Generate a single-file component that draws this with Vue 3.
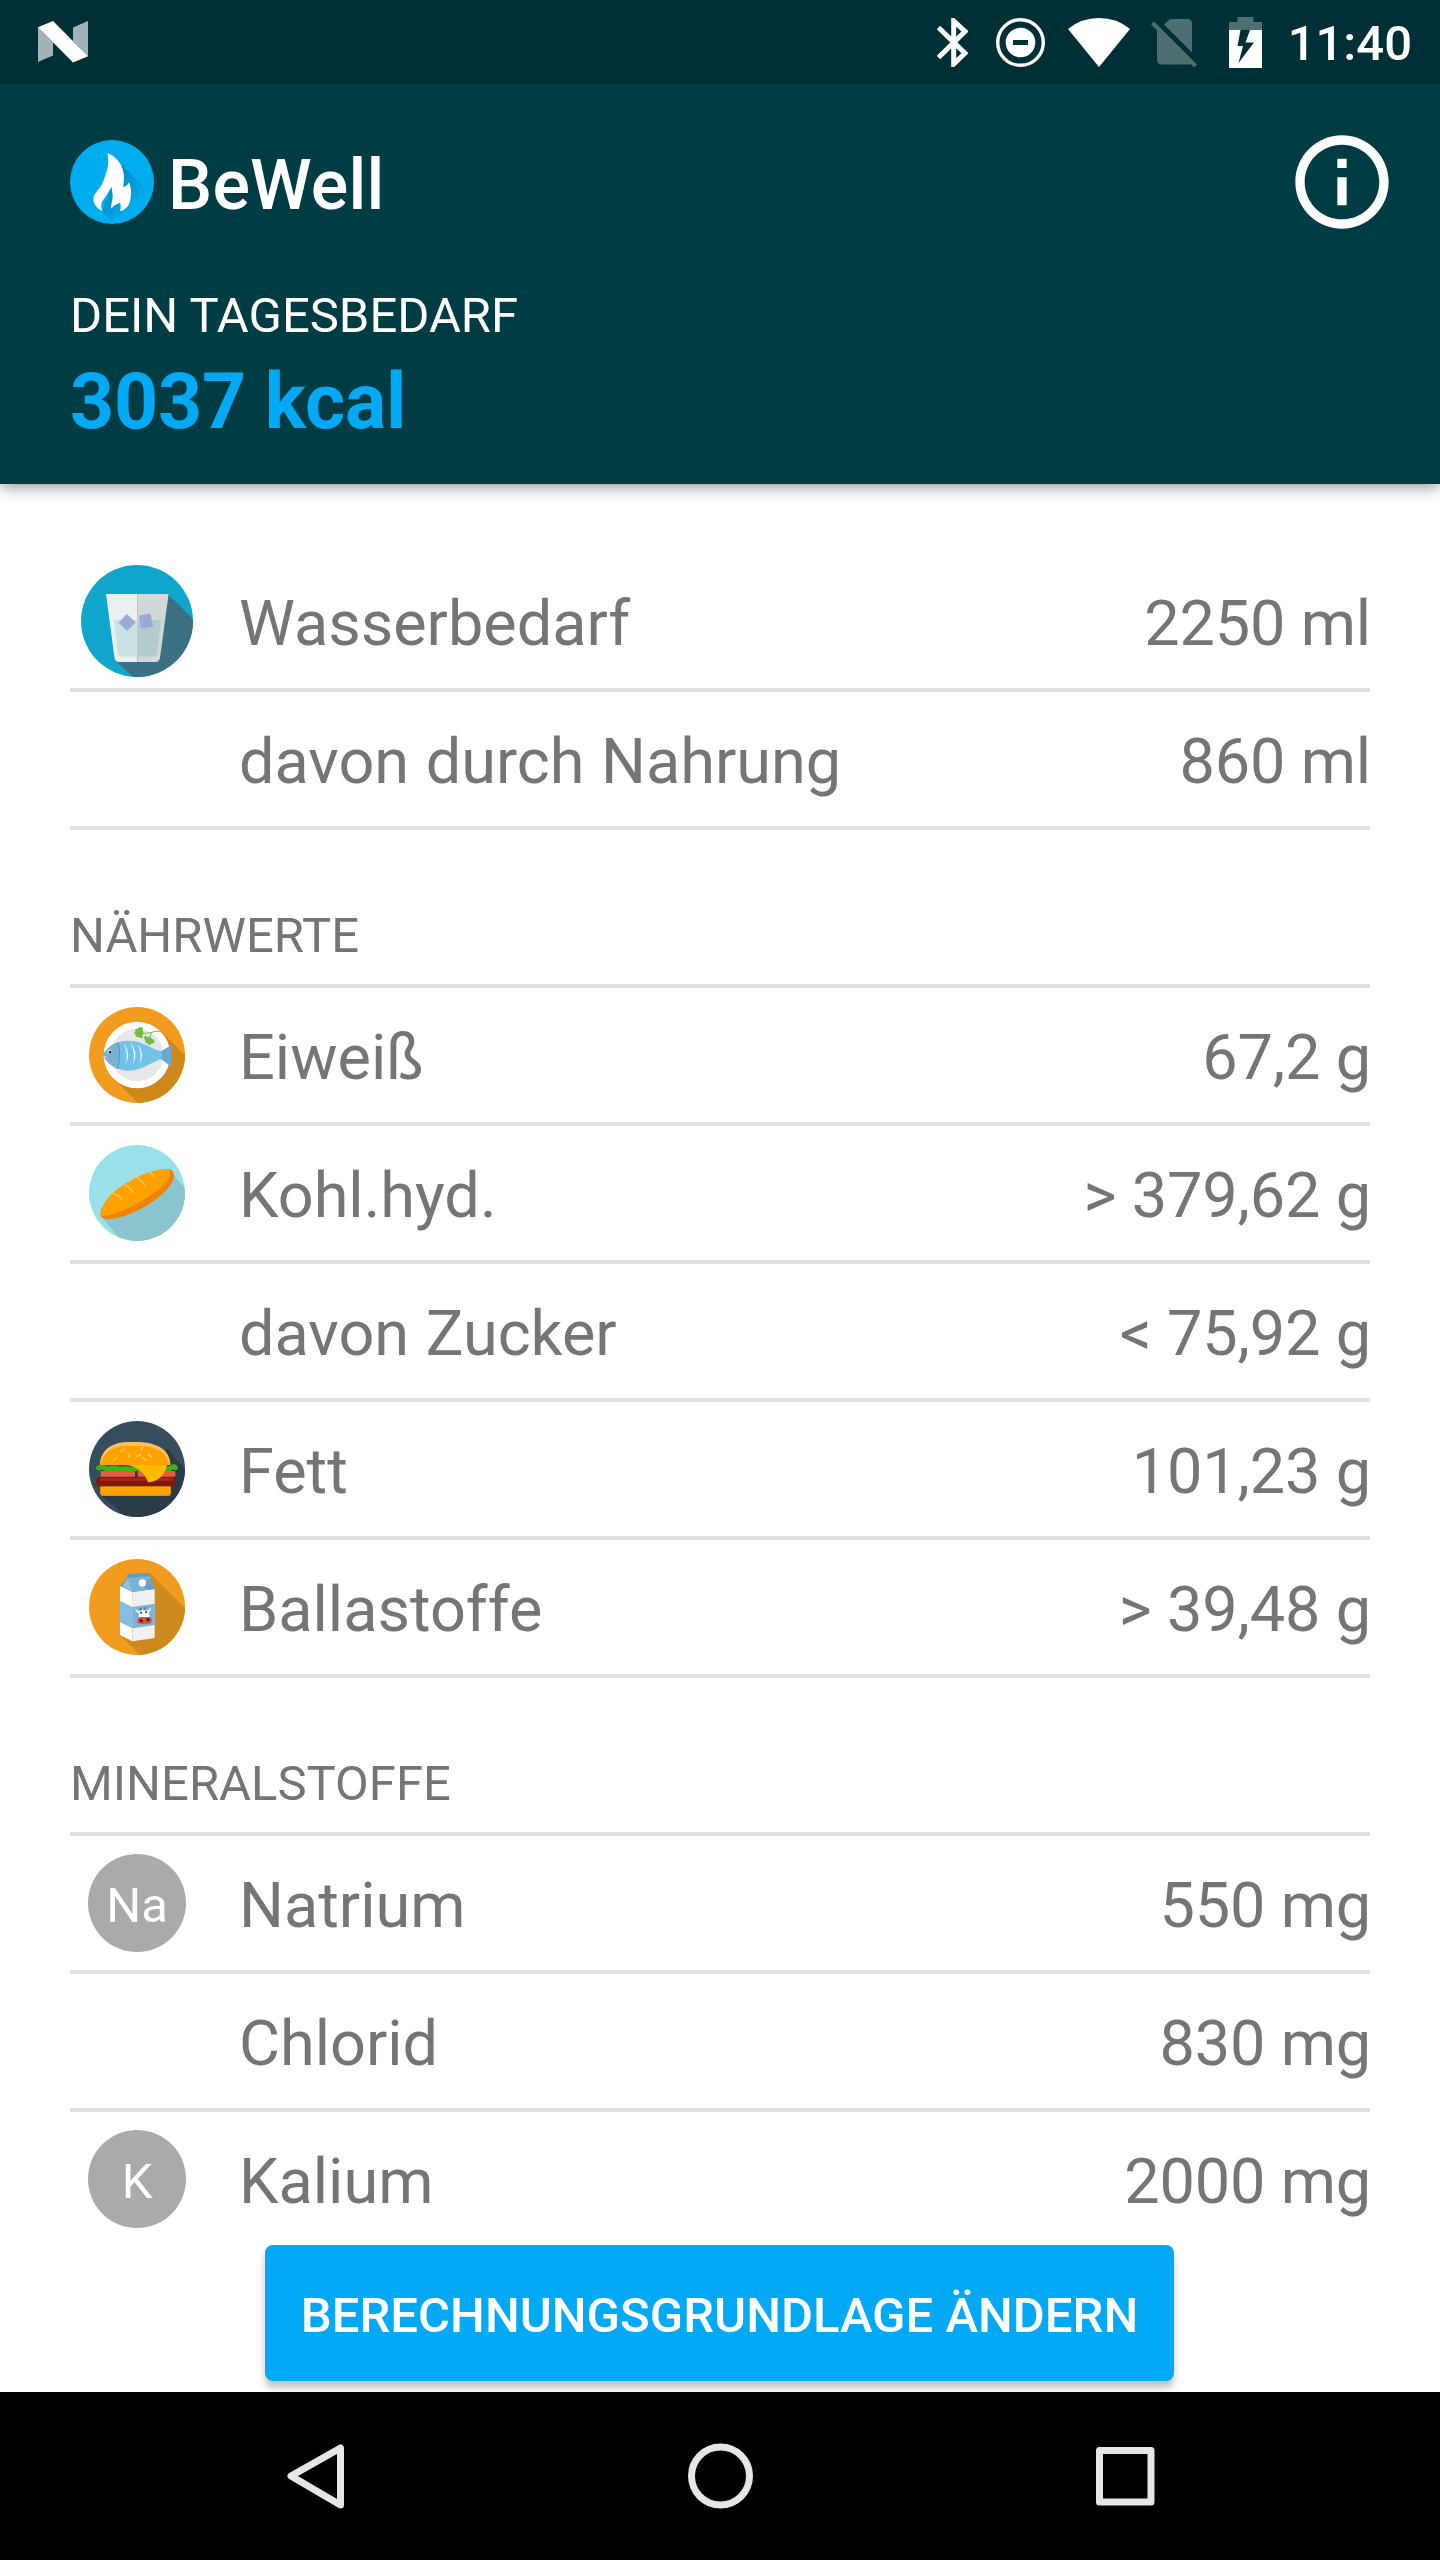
<template>
	<div class="screen">
		<div class="status-bar">
			<svg class="icon-n" viewBox="0 0 50 42">
				<path d="M0 6v35l15-6.500V21.500zM35 6.500L50 0v35.500L35 20z" fill="#a1b3b6" />
				<path d="M0 6.200L15 0l35 35.200L35 41.500z" fill="#fff" />
			</svg>
			<div class="status-icons">
				<svg class="icon-bluetooth" viewBox="0 0 31 49">
					<path d="M1.500 9.500L28 35.200 16.700 46V3L28 13.500 1.500 39.500" fill="none" stroke="#fff" stroke-width="5" />
				</svg>
				<svg class="icon-dnd" viewBox="0 0 49 49">
					<circle cx="24.500" cy="24.500" r="22.800" fill="none" stroke="#fff" stroke-width="3.400" />
					<path d="M24.500 9.700a14.800 14.800 0 1 0 0 29.600 14.800 14.800 0 0 0 0-29.600zM17 22h15v5H17z" fill="#fff" fill-rule="evenodd" />
				</svg>
				<svg class="icon-wifi" viewBox="0 0 62 49">
					<path d="M31 49L0 11Q13 0 31 0t31 11z" fill="#fff" />
				</svg>
				<svg class="icon-sim" viewBox="0 0 46 49">
					<g fill="#4d6f74">
						<path d="M13 6.500L19 1h17q5 0 5 5v28.500z" />
						<path d="M6 12l34 33.500q-1 1-3 1H11q-5 0-5-5z" />
						<path d="M0 6.300L3 3.500 46 46.500 43 49.500z" />
					</g>
				</svg>
				<svg class="icon-battery" viewBox="0 0 33 51">
					<path d="M0 13V5h8.500V0h16v5H33v8z" fill="#4d6f74" />
					<path d="M0 13h33v38H0z" fill="#fff" />
					<path d="M11.500 13h9.500l-4.500 12.500h8.500L9.500 46l4.500-17H8.500z" fill="#003036" />
				</svg>
				<span class="clock">11:40</span>
			</div>
		</div>

		<header class="header">
			<div class="title-bar">
				<svg class="logo" viewBox="0 0 252 252">
					<defs>
						<linearGradient id="flame-shade" x1="0.300" y1="0.300" x2="0.800" y2="0.800">
							<stop offset="0" stop-color="#008fc9" />
							<stop offset="1" stop-color="#00aeef" />
						</linearGradient>
					</defs>
					<circle cx="126" cy="126" r="126" fill="#00aeef" />
					<path d="M152 72l80 76-55 62-27 12-24 20-30-28z" fill="url(#flame-shade)" />
					<path
						d="M112 39C140 48 162 80 162 110c0 12-2 22-2 32 8-4 14-8 17-15 8 20 7 36 4 52-3 18-14 30-31 35 3-10 3-17 0-25-10 3-20 8-27 17-1-10 4-20 5-34 0-14-3-24-3-32-10 14-15 28-25 39-9 12-7 24-2 34C76 204 66 184 72 168c6-14 20-24 27-42 8-22 22-50 13-87z"
						fill="#fff"
					/>
				</svg>
				<h1 class="title">BeWell</h1>
				<svg class="icon-info" viewBox="0 0 24 24">
					<path
						d="M11 7h2v2h-2zm0 4h2v6h-2zm1-9C6.480 2 2 6.480 2 12s4.480 10 10 10 10-4.480 10-10S17.520 2 12 2zm0 18c-4.410 0-8-3.590-8-8s3.590-8 8-8 8 3.590 8 8-3.590 8-8 8z"
						fill="#fff"
					/>
				</svg>
			</div>
			<div class="need-label">DEIN TAGESBEDARF</div>
			<div class="need-value">3037 kcal</div>
		</header>

		<main class="content">
			<section v-for="(section, i) in sections" :key="i" class="section">
				<h2 v-if="section.title" class="section-title">{{ section.title }}</h2>
				<div v-for="row in section.rows" :key="row.label" class="row">
					<div class="row-icon">
						<svg v-if="row.icon === 'water'" class="water" viewBox="0 0 112 112">
							<clipPath id="clip-water"><circle cx="56" cy="56" r="56" /></clipPath>
							<g clip-path="url(#clip-water)">
								<path d="M0 0h112v112H0z" fill="#10a6cc" />
								<path d="M87 29l25 25v58H52L35 96z" fill="#3c7083" />
							</g>
							<path d="M25 29h31.300v68H38q-3.500 0-4.500-4z" fill="#ebeff1" />
							<path d="M56.300 29h31.300L79 93q-1 4-4.500 4H56.300z" fill="#d2d7d8" />
							<path d="M33 55h23.300v36.500H41q-4 0-4.500-4z" fill="#cae2e2" />
							<path d="M56.300 55H80l-3.500 32.500q-.5 4-4.500 4H56.300z" fill="#b2cccc" />
							<path d="M46 49.500l8 8-8 8-8-8zM58.500 51l10.500-2 2.500 12-11 2z" fill="#9ba9d6" stroke="#9ba9d6" stroke-linejoin="round" />
						</svg>

						<svg v-else-if="row.icon === 'fish'" viewBox="0 0 288 288">
							<clipPath id="clip-fish"><circle cx="144" cy="144" r="144" /></clipPath>
							<g clip-path="url(#clip-fish)">
								<path d="M0 0h288v288H0z" fill="#f29c1f" />
								<path d="M215 72l73 73v143H148l-76-74z" fill="#cd871b" />
							</g>
							<circle cx="144" cy="144" r="100" fill="#fff" />
							<circle cx="144" cy="144" r="79" fill="#e6e7e9" />
							<path d="M41 144c20-32 48-43 78-43 42 0 66 24 98 32l31-19q-5 30 0 65l-31-22c-32 8-56 34-98 34-30 0-60-15-78-47z" fill="#72c3e8" />
							<path d="M217 133l31-19q-5 30 0 65l-31-22q4-12 0-24z" fill="#68a7d0" />
							<path d="M41 144c12-20 28-33 46-38q8 38-1 79c-19-7-35-22-45-41z" fill="#7ab0d2" />
							<path d="M87 106q10 38-1 79" fill="none" stroke="#5b95bd" stroke-width="3" />
							<path d="M106 111q18 30 5 56 8-28-5-56zM127 112q20 28 6 55 8-27-6-55zM148 115q17 25 5 50 7-25-5-50z" fill="#fff" stroke="#fff" stroke-width="1" />
							<circle cx="62" cy="134" r="6.500" fill="#fff" />
							<circle cx="63" cy="135" r="4.500" fill="#222" />
							<path d="M43 150h9" stroke="#fff" stroke-width="2.500" />
							<path d="M158 80q28-2 38-6 12-2 24 0M187 77l-4 16" fill="none" stroke="#73bd42" stroke-width="3" />
							<path d="M162 62l-12-2-4 5-7 1v7l-4 5 5 5 1 7 7-1 5 4 9-1-2-12 4-5-3-6z" fill="#73bd42" />
							<path d="M169 85l-5 9 5 5-1 7 7 3 6 6 6-5 7-1 3-6-3-5-6-3-5-7-7 2z" fill="#73bd42" />
						</svg>

						<svg v-else-if="row.icon === 'bread'" viewBox="0 0 288 288">
							<clipPath id="clip-bread"><circle cx="144" cy="144" r="144" /></clipPath>
							<g clip-path="url(#clip-bread)">
								<path d="M0 0h288v288H0z" fill="#99e0e8" />
								<path d="M254 90l34 40v158H98L38 216z" fill="#8bc6d0" />
							</g>
							<path d="M37 216c-10-18 14-58 58-90 48-34 104-54 142-54 14 1 21 12 17 27-7 30-46 64-94 90-48 27-108 42-123 27z" fill="#f08200" />
							<path d="M36 212c-6-22 20-58 60-87 46-33 104-53 140-53 13 4 8 22-6 40-23 28-74 61-118 80-32 14-60 22-76 20z" fill="#ffa200" />
							<path d="M64 142q30 5 37 24-13-15-37-24zM100 116q25 4 35 30-13-19-35-30zM135 94q25 5 34 31-13-20-34-31zM172 79q19 1 26 20-11-15-26-20z" fill="#ffc05c" stroke="#ffc05c" stroke-width="2" />
						</svg>

						<svg v-else-if="row.icon === 'burger'" viewBox="0 0 288 288">
							<clipPath id="clip-burger"><circle cx="144" cy="144" r="144" /></clipPath>
							<g clip-path="url(#clip-burger)">
								<path d="M0 0h288v288H0z" fill="#354d5c" />
								<path d="M236 85l52 60v143H110L33 218z" fill="#2a3c48" />
							</g>
							<path d="M33 196h213v19q0 10-11 10H44q-11 0-11-10z" fill="#f08a00" />
							<path d="M36 196h207v16q0 9-10 9H46q-10 0-10-9z" fill="#ffa200" />
							<rect x="21" y="168" width="239" height="28" rx="11" fill="#7b1a0e" />
							<rect x="33" y="170" width="220" height="10" rx="4" fill="#a82315" />
							<rect x="35" y="150" width="103" height="17" rx="3" fill="#ec5a46" />
							<rect x="146" y="150" width="113" height="17" rx="3" fill="#ec5a46" />
							<path d="M29 141q9-5 17 0t19 2 18 0 18 1 18 1 18-1 18 0 18-1 18 0 18-1 18 0 18-1 14-1" fill="none" stroke="#3fb60f" stroke-width="15" stroke-linecap="round" />
							<path d="M33 132C33 88 68 63 118 63h24c64 0 102 25 102 69z" fill="#ffc05c" />
							<path d="M36 132c2-36 34-58 82-58h24c60 0 94 20 98 58z" fill="#ffa200" />
							<path d="M109 132h126c-8 30-30 52-58 52-9-28-34-50-68-52z" fill="#ffba00" />
							<path d="M94 93l13-11M119 97l2 14M161 76l-5 13M142 107l14-7M159 109l14 9M177 100l14 11M74 118l11-9" stroke="#ffd15c" stroke-width="4" />
						</svg>

						<svg v-else-if="row.icon === 'milk'" viewBox="0 0 288 288">
							<clipPath id="clip-milk"><circle cx="144" cy="144" r="144" /></clipPath>
							<g clip-path="url(#clip-milk)">
								<path d="M0 0h288v288H0z" fill="#f29c1f" />
								<path d="M183 42l105 106v140H152l-57-58z" fill="#cf8a1e" />
							</g>
							<path d="M93 81l37 18v148l-37-19z" fill="#fff" />
							<path d="M130 99l67-9v147l-67 10z" fill="#f1f1f1" />
							<path d="M93 125l37 19v64l-37-18z" fill="#82c0e3" />
							<path d="M130 144l67-10v64l-67 10z" fill="#78b4d8" />
							<path d="M93 81l23-26 2 10-18 19z" fill="#5c9dc5" />
							<path d="M116 55l67-5 14 40-67 9-31-17z" fill="#78b4d8" />
							<path d="M99 81l19-20 12 38z" fill="#8ac4e5" />
							<path d="M160 82l24-25 13 33-20 2z" fill="#689fc3" />
							<path d="M115 45l68-3v10l-68 5z" fill="#5c9dc5" />
							<circle cx="160" cy="72" r="11" fill="#fff" />
							<path d="M138 149l11 8q14-6 24-1l13-9q-1 10-7 14l4 16h-35l3-15q-9-1-13-13z" fill="#fff" />
							<path d="M153 147l3 6M169 145l-2 7" stroke="#776255" stroke-width="4" />
							<rect x="145" y="174" width="43" height="20" rx="9" fill="#e9493c" />
							<g fill="#3a2520">
								<circle cx="157" cy="185" r="5" />
								<circle cx="177" cy="182" r="5" />
								<circle cx="156" cy="161" r="3" />
								<circle cx="171" cy="160" r="3" />
							</g>
						</svg>

						<span v-else-if="row.badge" class="badge">{{ row.badge }}</span>
					</div>
					<span class="row-label">{{ row.label }}</span>
					<span class="row-value">{{ row.value }}</span>
				</div>
			</section>
		</main>

		<div class="action-bar">
			<button class="button" type="button">BERECHNUNGSGRUNDLAGE ÄNDERN</button>
		</div>

		<nav class="nav-bar">
			<div class="nav-item">
				<svg viewBox="0 0 66 66">
					<path d="M9 33L58.500 5v57z" />
				</svg>
			</div>
			<div class="nav-item">
				<svg viewBox="0 0 66 66">
					<circle cx="33.500" cy="33" r="29" />
				</svg>
			</div>
			<div class="nav-item">
				<svg viewBox="0 0 66 66">
					<rect x="7.500" y="7.500" width="51.500" height="51.500" />
				</svg>
			</div>
		</nav>
	</div>
</template>

<script setup>
const sections = [
	{
		rows: [
			{ label: 'Wasserbedarf', value: '2250 ml', icon: 'water' },
			{ label: 'davon durch Nahrung', value: '860 ml' },
		],
	},
	{
		title: 'NÄHRWERTE',
		rows: [
			{ label: 'Eiweiß', value: '67,2 g', icon: 'fish' },
			{ label: 'Kohl.hyd.', value: '> 379,62 g', icon: 'bread' },
			{ label: 'davon Zucker', value: '< 75,92 g' },
			{ label: 'Fett', value: '101,23 g', icon: 'burger' },
			{ label: 'Ballastoffe', value: '> 39,48 g', icon: 'milk' },
		],
	},
	{
		title: 'MINERALSTOFFE',
		rows: [
			{ label: 'Natrium', value: '550 mg', badge: 'Na' },
			{ label: 'Chlorid', value: '830 mg' },
			{ label: 'Kalium', value: '2000 mg', badge: 'K' },
		],
	},
]
</script>

<style>
body {
	margin: 0;
	background: #fff;
}
</style>

<style scoped>
.screen {
	display: flex;
	flex-direction: column;
	width: 1440px;
	height: 2560px;
	overflow: hidden;
	background: #fff;
	color: #757575;
	font-family: Roboto, sans-serif;
}

.screen svg {
	display: block;
	flex-shrink: 0;
}

.status-bar {
	display: flex;
	align-items: center;
	justify-content: space-between;
	box-sizing: border-box;
	flex-shrink: 0;
	height: 84px;
	padding: 0 28px 0 38px;
	background: #003036;
}

.icon-n {
	width: 50px;
	height: 42px;
}

.status-icons {
	display: flex;
	align-items: center;
}

.icon-bluetooth {
	width: 31px;
	height: 49px;
	margin-right: 28px;
}

.icon-dnd {
	width: 49px;
	height: 49px;
	margin-right: 23px;
}

.icon-wifi {
	width: 62px;
	height: 49px;
	margin-right: 21px;
}

.icon-sim {
	width: 46px;
	height: 49px;
	margin-right: 32px;
}

.icon-battery {
	width: 33px;
	height: 51px;
	margin-right: 26px;
}

.clock {
	color: #fff;
	font-size: 49px;
	font-weight: 500;
	line-height: 84px;
	padding-top: 4px;
}

.header {
	position: relative;
	box-sizing: border-box;
	flex-shrink: 0;
	height: 400px;
	padding: 42px 42px 0 70px;
	background: #003c43;
	box-shadow: 0 4px 14px rgba(0, 0, 0, 0.38);
}

.title-bar {
	display: flex;
	align-items: center;
	height: 112px;
}

.logo {
	width: 84px;
	height: 84px;
}

.title {
	flex: 1;
	margin: 6px 0 0 14px;
	color: #fff;
	font-size: 70px;
	font-weight: 500;
	letter-spacing: 0.2px;
	line-height: 82px;
}

.icon-info {
	width: 112px;
	height: 112px;
}

.need-label {
	margin-top: 49px;
	color: #fff;
	font-size: 49px;
	line-height: 58px;
}

.need-value {
	margin-top: 12px;
	color: #03a9f4;
	font-size: 77px;
	font-weight: 700;
	letter-spacing: -0.2px;
	line-height: 90px;
}

.content {
	flex: 1;
	min-height: 0;
	overflow: hidden;
	padding: 70px 70px 0;
}

.section-title {
	box-sizing: border-box;
	height: 158px;
	margin: 0;
	padding-top: 77px;
	border-bottom: 4px solid #e0e0e0;
	font-size: 49px;
	font-weight: 400;
	line-height: 58px;
}

.row {
	display: flex;
	align-items: center;
	height: 134px;
	border-bottom: 4px solid #e0e0e0;
	font-size: 63px;
	line-height: 74px;
}

.row-icon {
	display: flex;
	justify-content: center;
	width: 134px;
	margin-right: 35px;
}

.row-icon svg {
	width: 96px;
	height: 96px;
}

.row-icon .water {
	width: 112px;
	height: 112px;
}

.badge {
	width: 98px;
	height: 98px;
	border-radius: 50%;
	background: #aaa;
	color: #fff;
	font-size: 49px;
	line-height: 103px;
	text-align: center;
}

.row-label,
.row-value {
	padding-top: 6px;
}

.row-label {
	flex: 1;
	word-spacing: 1px;
}

.row-value {
	margin-right: -1px;
	letter-spacing: -0.15px;
}

.action-bar {
	display: flex;
	justify-content: center;
	align-items: flex-start;
	box-sizing: border-box;
	flex-shrink: 0;
	height: 147px;
	padding-right: 1px;
	background: #fff;
}

.button {
	width: 909px;
	height: 136px;
	padding: 4px 0 0;
	border: 0;
	border-radius: 8px;
	background: #03a9f4;
	box-shadow: 0 7px 7px rgba(0, 0, 0, 0.24);
	color: #fff;
	font-family: inherit;
	font-size: 49px;
	font-weight: 500;
	letter-spacing: 0.04px;
	white-space: nowrap;
}

.nav-bar {
	position: relative;
	display: flex;
	justify-content: center;
	align-items: center;
	flex-shrink: 0;
	height: 168px;
	background: #000;
}

.nav-item {
	display: flex;
	justify-content: center;
	width: 405px;
}

.nav-item svg {
	width: 66px;
	height: 66px;
	fill: none;
	stroke: #e6e6e6;
	stroke-width: 7;
	stroke-linejoin: round;
}
</style>
